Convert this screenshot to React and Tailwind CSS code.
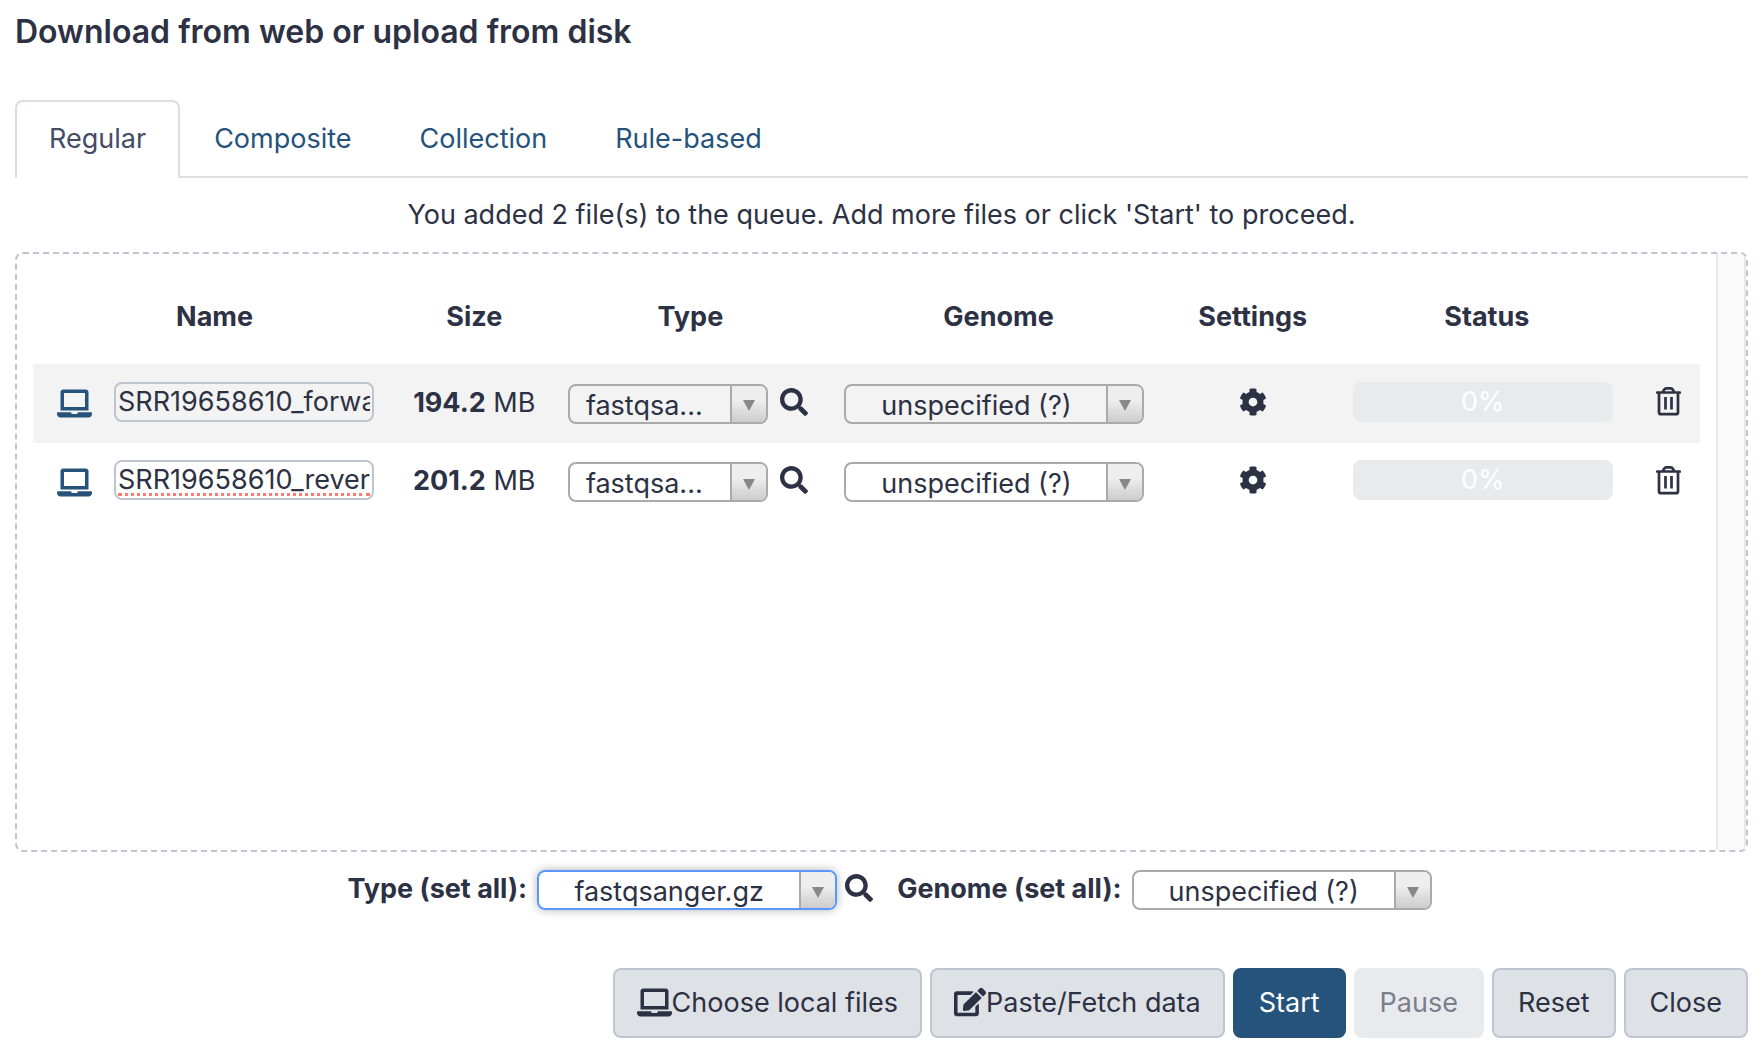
import React from "react";
import { FaLaptop, FaSearch, FaCog, FaEdit } from "react-icons/fa";

function TrashIcon() {
  return (
    <svg viewBox="0 0 25 29" className="h-[29px] w-[25px]" fill="none" stroke="currentColor" strokeWidth="2.7" aria-hidden="true">
      <path d="M1.2 5.5h22.600" strokeLinecap="round" />
      <path d="M6.8 5l1.4-2.400q.7-1.200 2-1.200h4.600q1.300 0 2 1.200L18.200 5" />
      <path d="M3 6v19.200q0 2 2 2h15q2 0 2-2V6" />
      <path d="M9.500 10v12.500M15.500 10v12.500" />
    </svg>
  );
}

function Picker({ id, label, value, className, selectPadding = "pr-9", focused = false }) {
  return (
    <div
      className={
        (focused ? "border-[#5897fb] shadow-[0_0_10px_rgba(0,0,0,0.3)] " : "border-[#aaaaaa] ") +
        "relative h-10 overflow-hidden rounded-lg border-2 " + className
      }
    >
      <select
        id={id}
        aria-label={label}
        defaultValue={value}
        className={
          "h-full w-full appearance-none bg-transparent text-center [text-align-last:center] outline-none " + selectPadding
        }
      >
        <option>{value}</option>
      </select>
      <span className="pointer-events-none absolute inset-y-0 right-0 flex w-9 items-center justify-center border-l-2 border-[#aaaaaa] bg-linear-to-b from-[#eeeeee] from-40% to-[#cccccc] pt-1">
        <svg viewBox="0 0 12 11" className="h-[11px] w-3" aria-hidden="true">
          <path d="M0 0h12L6 11z" fill="#888888" />
        </svg>
      </span>
    </div>
  );
}

const tabs = ["Regular", "Composite", "Collection", "Rule-based"];

const files = [
  { name: "SRR19658610_forward.fastq.gz", size: "194.2", flagged: false },
  { name: "SRR19658610_reverse.fastq.gz", size: "201.2", flagged: true },
];

function FileRow({ file, shaded }) {
  return (
    <tr className={shaded ? "h-[79px] bg-[#f3f3f3]" : "h-[78px]"}>
      <td className="pl-6">
        <FaLaptop className="size-[35px] text-[#25537b]" />
      </td>
      <td className="pr-[22px] pb-1 pl-4">
        <div className="relative">
          <input
            type="text"
            aria-label="File name"
            defaultValue={file.name}
            className="block h-10 w-full rounded-lg border-2 border-[#bdc6d0] bg-transparent px-0.5 outline-none"
          />
          {file.flagged && (
            <span className="absolute inset-x-1 bottom-1 border-b-3 border-dotted border-[#ff7a70]" />
          )}
        </div>
      </td>
      <td className="pb-0.5 text-center whitespace-nowrap">
        <strong className="font-bold">{file.size}</strong> MB
      </td>
      <td className="pl-4">
        <div className="flex items-center gap-3">
          <Picker label="Type" value="fastqsa..." className="w-[200px]" selectPadding="pr-12" />
          <button type="button" aria-label="Type details" className="pb-1">
            <FaSearch className="size-7" />
          </button>
        </div>
      </td>
      <td className="pl-4">
        <Picker label="Genome" value="unspecified (?)" className="w-[300px]" />
      </td>
      <td className="pb-1">
        <button type="button" aria-label="Settings" className="mx-auto flex">
          <FaCog className="size-7" />
        </button>
      </td>
      <td className="pr-6 pb-1 pl-4">
        <div role="progressbar" aria-valuenow={0} aria-label="Upload progress" className="flex h-10 items-center justify-center rounded-lg bg-[#e9eaee] text-white">
          0%
        </div>
      </td>
      <td className="pb-1">
        <button type="button" aria-label="Remove" className="mx-auto flex">
          <TrashIcon />
        </button>
      </td>
    </tr>
  );
}

const buttonBase = "flex h-[70px] items-center rounded-lg border-2 ";
const buttonPlain = buttonBase + "border-[#bdc6d0] bg-[#dee1e6] ";

export default function App() {
  return (
    <main className="flex flex-col bg-white pt-3 pr-4 pb-3.5 pl-[15px] font-['Inter',sans-serif] text-[27px] leading-10 text-[#2c3143]">
      <h1 className="text-[32px] font-semibold">Download from web or upload from disk</h1>

      <nav className="mt-12 flex border-b-2 border-[#dadfe4]">
        {tabs.map((tab, i) => (
          <a
            key={tab}
            href="#"
            className={
              i === 0
                ? "-mb-0.5 rounded-t-lg border-2 border-b-0 border-[#dadfe4] bg-white px-8 pt-[17px] pb-[18px] text-[#444c66]"
                : "border-2 border-b-0 border-transparent px-8 pt-[17px] pb-[17px] text-[#25537b]"
            }
          >
            {tab}
          </a>
        ))}
      </nav>

      <p className="mt-[17px] text-center">
        You added 2 file(s) to the queue. Add more files or click 'Start' to proceed.
      </p>

      <section className="mt-[17px] flex min-h-[600px] overflow-hidden rounded-lg border-2 border-dashed border-[#bdc6d0]">
        <div className="flex-1 px-4">
          <table className="w-full table-fixed">
            <colgroup>
              <col className="w-[65px]" />
              <col className="w-[298px]" />
              <col className="w-[156px]" />
              <col className="w-[276px]" />
              <col className="w-[340px]" />
              <col className="w-[168px]" />
              <col className="w-[300px]" />
              <col className="w-[63px]" />
            </colgroup>
            <thead>
              <tr className="h-[110px]">
                <th colSpan={2} className="pt-4">Name</th>
                <th className="pt-4">Size</th>
                <th className="pt-4">Type</th>
                <th className="pt-4">Genome</th>
                <th className="pt-4">Settings</th>
                <th className="pt-4">Status</th>
                <th aria-label="Remove" />
              </tr>
            </thead>
            <tbody>
              {files.map((file, i) => (
                <FileRow key={file.name} file={file} shaded={i === 0} />
              ))}
            </tbody>
          </table>
        </div>
        <div className="w-[30px] border-x-2 border-[#e8e8e8] bg-[#fafafa]" />
      </section>

      <div className="mt-[17px] flex items-center justify-center pl-4">
        <label htmlFor="type-all" className="pb-0.5 font-bold">Type (set all):</label>
        <Picker id="type-all" value="fastqsanger.gz" className="ml-2.5 w-[300px]" focused />
        <button type="button" aria-label="Type details" className="ml-2 pb-1">
          <FaSearch className="size-7" />
        </button>
        <label htmlFor="genome-all" className="ml-6 pb-0.5 font-bold">Genome (set all):</label>
        <Picker id="genome-all" value="unspecified (?)" className="ml-2.5 w-[300px]" />
      </div>

      <footer className="mt-[57px] flex justify-end gap-2">
        <button type="button" className={buttonPlain + "px-[22px]"}>
          <FaLaptop className="mb-0.5 size-[35px]" />
          Choose local files
        </button>
        <button type="button" className={buttonPlain + "px-[22px]"}>
          <FaEdit className="mb-0.5 size-8" />
          Paste/Fetch data
        </button>
        <button type="button" className={buttonBase + "border-[#25537b] bg-[#25537b] px-6 text-white"}>Start</button>
        <button type="button" disabled className={buttonBase + "border-[#e9eaee] bg-[#e9eaee] px-6 text-[#7b7f8c]"}>Pause</button>
        <button type="button" className={buttonPlain + "px-6"}>Reset</button>
        <button type="button" className={buttonPlain + "px-6"}>Close</button>
      </footer>
    </main>
  );
}
